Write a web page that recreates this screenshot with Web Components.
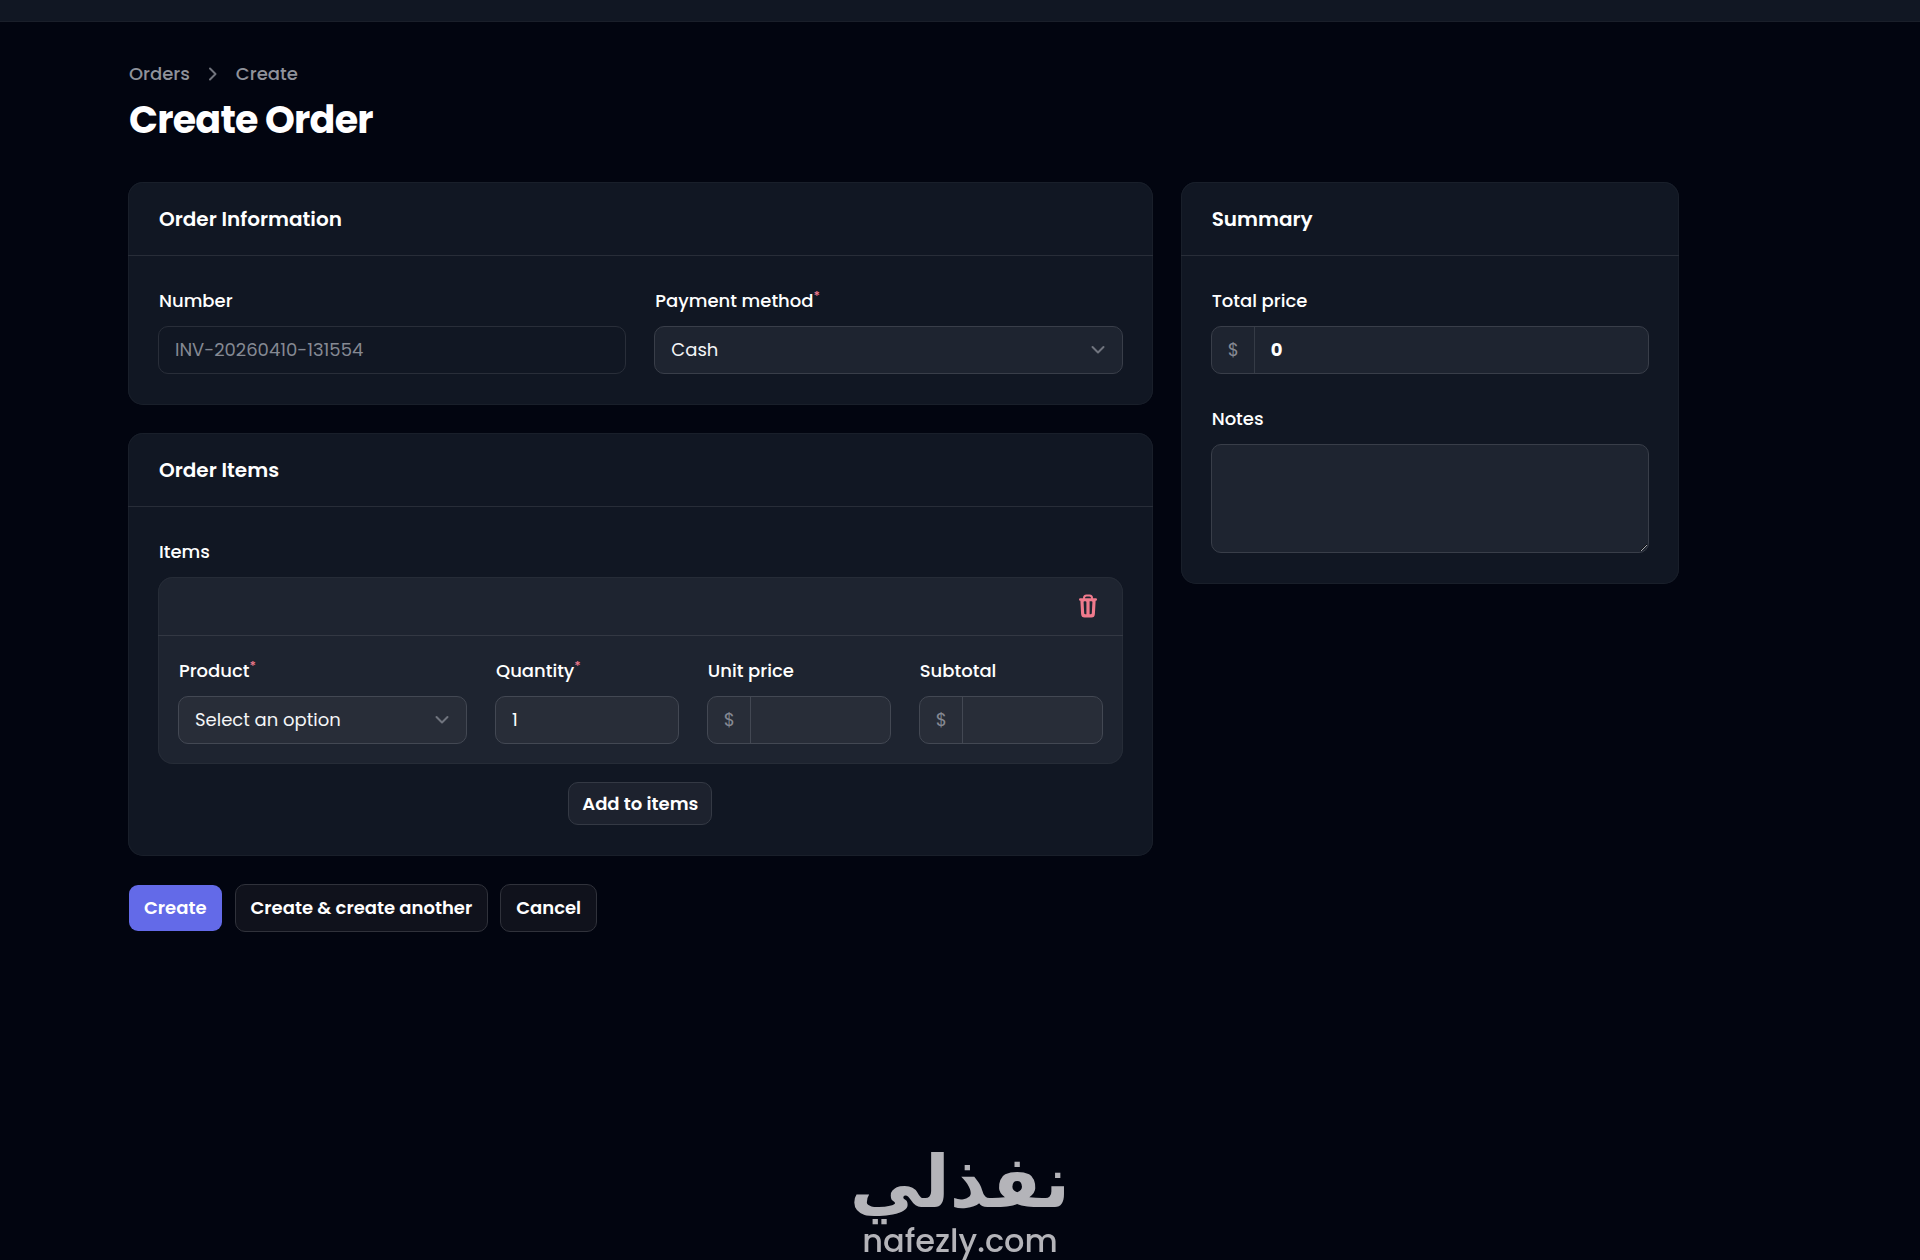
<!DOCTYPE html>
<html lang="en">
<head>
<meta charset="utf-8">
<meta name="viewport" content="width=device-width, initial-scale=1">
<title>Create Order</title>
<style>
  :root {
    --page: #020510;
    --card: #111723;
    --line: #282d38;
    --fs: 18px;
    --primary: #636ae8;
    --danger: #f07a8c;
    --muted: #8f929b;
    --radius: 10px;
  }
  html { height: 100%; }
  body {
    margin: 0; min-height: 100%; background: var(--page); color: #fff;
    font-family: Poppins, Inter, "Noto Sans", sans-serif;
    font-size: var(--fs); line-height: 30px;
  }
</style>
</head>
<body>
<order-page></order-page>

<script>
const define = (name, html, setup) => {
  const template = document.createElement('template');
  template.innerHTML = html;
  customElements.define(name, class extends HTMLElement {
    connectedCallback() {
      if (this.shadowRoot) return;
      this.attachShadow({ mode: 'open' }).append(template.content.cloneNode(true));
      if (setup) setup(this, this.shadowRoot);
    }
  });
};

const CHEVRON = '<svg viewBox="0 0 14 10" width="14" height="10" aria-hidden="true"><path d="M1.5 2 7 7.5 12.5 2" fill="none" stroke="currentColor" stroke-width="2" stroke-linecap="round" stroke-linejoin="round"/></svg>';

define('top-bar', `
<style>
  :host { display: block; height: 21px; background: var(--card); border-bottom: 1px solid #1a1f2a; }
</style>`);

define('crumb-trail', `
<style>
  :host { display: block; }
  nav { display: flex; align-items: center; gap: 17px; line-height: 24px; padding-left: 1px; color: var(--muted); font-weight: 500; }
  a { color: inherit; text-decoration: none; }
  svg { display: block; color: #71747d; }
</style>
<nav aria-label="Breadcrumb">
  <a href="#orders">Orders</a>
  <svg viewBox="0 0 12 16" width="12" height="16" aria-hidden="true"><path d="M3 2.500 8.500 8 3 13.500" fill="none" stroke="currentColor" stroke-width="2" stroke-linecap="round" stroke-linejoin="round"/></svg>
  <a href="#create">Create</a>
</nav>`);

define('form-card', `
<style>
  :host { display: block; background: var(--card); border-radius: 15px; box-shadow: inset 0 0 0 1px #191f2a; }
  header { padding: 22px 31px 21px; border-bottom: 1px solid var(--line); }
  h2 { margin: 0; font-size: 20px; line-height: 30px; font-weight: 600; }
  .body { padding: 30px 30px 31px; }
</style>
<section>
  <header><h2></h2></header>
  <div class="body"><slot></slot></div>
</section>`, (host, root) => {
  root.querySelector('h2').textContent = host.getAttribute('heading');
});

define('form-field', `
<style>
  :host { display: flex; flex-direction: column; gap: 10px; min-width: 0; }
  label { font-weight: 500; line-height: 30px; padding-left: 1px; }
  sup { color: var(--danger); font-size: 13px; line-height: 0; vertical-align: top; position: relative; top: 10px; }
  .box {
    display: grid; grid-template-columns: auto minmax(0, 1fr); align-items: stretch;
    box-sizing: border-box; border: 1px solid var(--edge, #393e49); border-radius: var(--radius);
    background: var(--fill, #1e2430); overflow: hidden;
  }
  .box.off { background: transparent; border-color: #292e39; }
  .prefix { padding: 0 15px 0 16px; line-height: 46px; color: #858993; border-right: 1px solid var(--edge, #353b46); }
  .control { grid-column: 2; grid-row: 1; }
  input, select, textarea {
    all: unset; display: block; box-sizing: border-box; width: 100%; font: inherit; color: #fff;
  }
  input, select { height: 46px; line-height: 46px; padding: 0 16px; }
  input:disabled { color: #858993; }
  select { padding-right: 46px; color: #f4f5f7; }
  textarea { height: 107px; padding: 8px 16px; resize: vertical; }
  .arrow { grid-column: 2; grid-row: 1; justify-self: end; align-self: center; margin-right: 17px; pointer-events: none; color: #70747e; }
  .arrow svg { display: block; }
  .strong { font-weight: 700; }
</style>
<label for="control"></label>
<div class="box"></div>`, (host, root) => {
  const label = root.querySelector('label');
  const box = root.querySelector('.box');
  const kind = host.getAttribute('kind') || 'input';
  label.textContent = host.getAttribute('label');
  if (host.hasAttribute('required')) label.insertAdjacentHTML('beforeend', '<sup>*</sup>');
  if (host.hasAttribute('prefix')) {
    const prefix = document.createElement('span');
    prefix.className = 'prefix';
    prefix.textContent = host.getAttribute('prefix');
    box.append(prefix);
  }
  const control = document.createElement(kind);
  control.id = 'control';
  control.className = 'control';
  if (host.hasAttribute('strong')) control.classList.add('strong');
  const value = host.getAttribute('value') || '';
  if (kind === 'select') {
    control.add(new Option(value, value));
  } else {
    control.value = value;
  }
  if (host.hasAttribute('disabled')) {
    control.disabled = true;
    box.classList.add('off');
  }
  box.append(control);
  if (kind === 'select') box.insertAdjacentHTML('beforeend', '<span class="arrow">' + CHEVRON + '</span>');
});

define('ui-button', `
<style>
  :host { display: inline-flex; }
  button {
    all: unset; box-sizing: border-box; cursor: pointer; font: inherit; font-weight: 600; color: #fff;
    height: var(--height, 48px); line-height: 30px; padding: 0 var(--pad, 15px);
    display: flex; align-items: center; white-space: nowrap;
    border: 1px solid var(--edge, #30323b); border-radius: var(--radius); background: var(--fill, #10121c);
  }
  :host([primary]) button { background: var(--primary); border-color: transparent; background-clip: padding-box; }
</style>
<button type="button"><slot></slot></button>`);

define('order-item', `
<style>
  :host {
    display: block; background: #1e2430; border-radius: 15px; box-shadow: inset 0 0 0 1px #262c37;
    --fill: #282d38; --edge: #434853;
  }
  .head { display: flex; justify-content: flex-end; align-items: center; height: 58px; padding: 0 23px; border-bottom: 1px solid #333843; }
  .head button { all: unset; cursor: pointer; color: var(--danger); }
  svg { display: block; }
  .fields { display: grid; grid-template-columns: 11fr 7fr 7fr 7fr; gap: 28px; padding: 20px; }
</style>
<div class="head">
  <button type="button" aria-label="Delete">
    <svg viewBox="0 0 24 24" width="24" height="24" aria-hidden="true">
      <path d="M8 5V4Q8 1.500 10.500 1.500h3Q16 1.500 16 4v1" fill="none" stroke="currentColor" stroke-width="2"/>
      <path d="M4.200 5.500H19.800" fill="none" stroke="currentColor" stroke-width="2.400" stroke-linecap="round"/>
      <path fill="currentColor" fill-rule="evenodd" d="M4.300 5.500h15.400l-.8 14.500q-.2 3.500-3.400 3.500h-7q-3.200 0-3.400-3.500ZM7.600 8.300l.6 10.900q.1 1.100 1.200 1.100h1V8.300q0-1-1-1h-.9q-1 0-.9 1Zm6-1v13h1q1.100 0 1.200-1.100l.6-10.900q.1-1-.9-1Z"/>
    </svg>
  </button>
</div>
<div class="fields">
  <form-field label="Product" required kind="select" value="Select an option"></form-field>
  <form-field label="Quantity" required value="1"></form-field>
  <form-field label="Unit price" prefix="$"></form-field>
  <form-field label="Subtotal" prefix="$"></form-field>
</div>`);

define('brand-mark', `
<style>
  :host { position: fixed; left: 0; right: 0; bottom: 0; display: flex; flex-direction: column; align-items: center; color: #b4b4b9; pointer-events: none; }
  .ar { font: 700 72px/80px "DejaVu Sans", sans-serif; }
  .en { font: 500 32px/38px Poppins, Inter, sans-serif; }
</style>
<span class="ar" lang="ar" dir="rtl">نفذلي</span>
<span class="en">nafezly.com</span>`);

define('order-page', `
<style>
  :host { display: block; }
  main { padding: 40px 241px 40px 128px; }
  h1 { margin: 12px 0 40px; padding-left: 1px; font-size: 38px; line-height: 44px; font-weight: 700; letter-spacing: -0.02em; }
  .columns { display: grid; grid-template-columns: repeat(3, minmax(0, 1fr)); gap: 28px; align-items: start; }
  .main { grid-column: span 2; display: flex; flex-direction: column; gap: 28px; }
  .pair { display: grid; grid-template-columns: 1fr 1fr; gap: 28px; }
  .stack { display: flex; flex-direction: column; gap: 30px; }
  .items { display: flex; flex-direction: column; }
  .caption { font-weight: 500; padding-left: 1px; margin-bottom: 10px; }
  .add { align-self: center; margin-top: 18px; --height: 43px; --pad: 13px; --fill: #1d222e; --edge: #343944; }
  .actions { display: flex; gap: 12px; }
</style>
<top-bar></top-bar>
<main>
  <crumb-trail></crumb-trail>
  <h1>Create Order</h1>
  <div class="columns">
    <div class="main">
      <form-card heading="Order Information">
        <div class="pair">
          <form-field label="Number" value="INV-20260410-131554" disabled></form-field>
          <form-field label="Payment method" required kind="select" value="Cash"></form-field>
        </div>
      </form-card>
      <form-card heading="Order Items">
        <div class="items">
          <span class="caption">Items</span>
          <order-item></order-item>
          <ui-button class="add">Add to items</ui-button>
        </div>
      </form-card>
      <div class="actions">
        <ui-button primary>Create</ui-button>
        <ui-button>Create &amp; create another</ui-button>
        <ui-button>Cancel</ui-button>
      </div>
    </div>
    <form-card heading="Summary">
      <div class="stack">
        <form-field label="Total price" prefix="$" value="0" strong></form-field>
        <form-field label="Notes" kind="textarea"></form-field>
      </div>
    </form-card>
  </div>
</main>
<brand-mark></brand-mark>`);
</script>
</body>
</html>
